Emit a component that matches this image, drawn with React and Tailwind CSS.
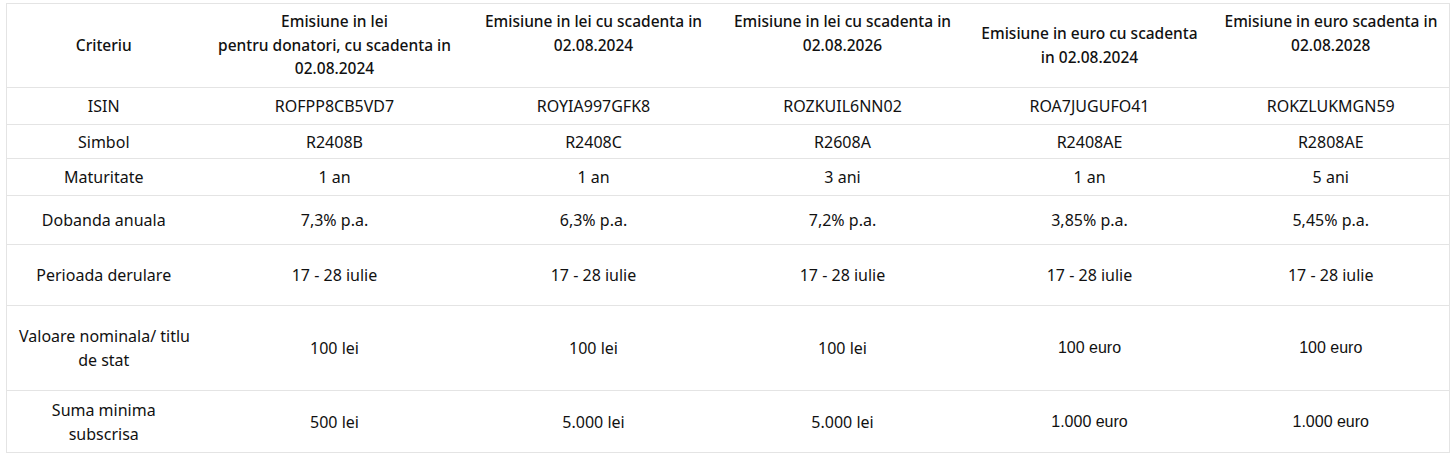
const columns = [
  { width: 'w-[194px]' },
  { width: 'w-[268px]' },
  { width: 'w-[250px]' },
  { width: 'w-[248px]' },
  { width: 'w-[246px]' },
  { width: 'w-[237px]' },
];

const rows = [
  {
    label: ['ISIN'],
    height: 'h-[37px]',
    cells: ['ROFPP8CB5VD7', 'ROYIA997GFK8', 'ROZKUIL6NN02', 'ROA7JUGUFO41', 'ROKZLUKMGN59'],
  },
  {
    label: ['Simbol'],
    height: 'h-[34px]',
    cells: ['R2408B', 'R2408C', 'R2608A', 'R2408AE', 'R2808AE'],
  },
  {
    label: ['Maturitate'],
    height: 'h-[37px]',
    cells: ['1 an', '1 an', '3 ani', '1 an', '5 ani'],
  },
  {
    label: ['Dobanda anuala'],
    height: 'h-[49px]',
    cells: ['7,3% p.a.', '6,3% p.a.', '7,2% p.a.', '3,85% p.a.', '5,45% p.a.'],
  },
  {
    label: ['Perioada derulare'],
    height: 'h-[61px]',
    cells: ['17 - 28 iulie', '17 - 28 iulie', '17 - 28 iulie', '17 - 28 iulie', '17 - 28 iulie'],
  },
  {
    label: ['Valoare nominala/ titlu', 'de stat'],
    height: 'h-[85px]',
    cells: ['100 lei', '100 lei', '100 lei', '100 euro', '100 euro'],
    arialFrom: 3,
  },
  {
    label: ['Suma minima', 'subscrisa'],
    height: 'h-[62px]',
    cells: ['500 lei', '5.000 lei', '5.000 lei', '1.000 euro', '1.000 euro'],
    arialFrom: 3,
  },
];

// third line left empty on purpose, the source has a trailing break there
const headers = [
  { lines: ['Emisiune in lei', 'pentru donatori, cu scadenta in', '02.08.2024'] },
  { lines: ['Emisiune in lei cu scadenta in', '02.08.2024', '\u00a0'] },
  { lines: ['Emisiune in lei cu scadenta in', '02.08.2026', '\u00a0'] },
  { lines: ['Emisiune in euro cu scadenta', 'in 02.08.2024'] },
  { lines: ['Emisiune in euro scadenta in', '02.08.2028', '\u00a0'] },
];

function Lines({ lines }) {
  return lines.map((line, i) => (
    <span key={i} className="block whitespace-nowrap">
      {line}
    </span>
  ));
}

export default function App() {
  return (
    <div className="bg-white min-h-screen pl-[6px] pt-[3px] font-['Noto_Sans',sans-serif] text-[16px] leading-[24px] text-[#111]">
      <table className="table-fixed border-collapse border border-[#e4e4e4] w-[1443px]">
        <colgroup>
          {columns.map((c, i) => (
            <col key={i} className={c.width} />
          ))}
        </colgroup>
        <thead>
          <tr className="h-[84px] border-b border-[#e4e4e4] text-[15.5px] leading-[23.5px]">
            <th className="font-medium text-center align-middle px-3">Criteriu</th>
            {headers.map((h, i) => (
              <th key={i} className="font-medium text-center align-middle px-3">
                <Lines lines={h.lines} />
              </th>
            ))}
          </tr>
        </thead>
        <tbody>
          {rows.map((row, r) => (
            <tr key={r} className={`${row.height} border-b border-[#e4e4e4]`}>
              <td className="text-center align-middle px-3">
                <Lines lines={row.label} />
              </td>
              {row.cells.map((cell, i) => (
                <td
                  key={i}
                  className={`text-center align-middle px-3 ${
                    row.arialFrom !== undefined && i >= row.arialFrom
                      ? "font-['Liberation_Sans',Arial,sans-serif]"
                      : ''
                  }`}
                >
                  {cell}
                </td>
              ))}
            </tr>
          ))}
        </tbody>
      </table>
    </div>
  );
}
